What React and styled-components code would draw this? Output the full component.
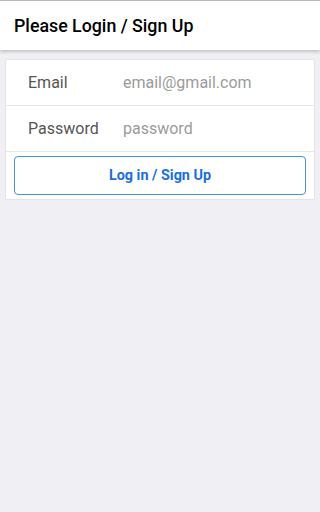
import styled, { createGlobalStyle } from 'styled-components';

const Global = createGlobalStyle`
    html, body {
        margin: 0;
        padding: 0;
        background: #efeff4;
        font-family: Roboto, "Liberation Sans", sans-serif;
    }
`;

function App(){
    return (
        <Page>
            <Global />
            <Header>
                <Title>Please Login / Sign Up</Title>
            </Header>
            <Card>
                <Row>
                    <Label>Email</Label>
                    <Input type="email" placeholder="email@gmail.com" />
                </Row>
                <Row>
                    <Label>Password</Label>
                    <Input type="password" placeholder="password" />
                </Row>
                <ButtonWrap>
                    <Button>Log in / Sign Up</Button>
                </ButtonWrap>
            </Card>
        </Page>
    )
}
    const Page = styled.div`
        min-height: 512px;
        background: #efeff4;
    `;
    const Header = styled.header`
        height: 49px;
        display: flex;
        align-items: center;
        padding: 0 14px;
        background: #fff;
        border-top: 1px solid #b8b8b8;
        box-shadow: 0 2px 3px rgba(0, 0, 0, .18);
    `;
    const Title = styled.h1`
        margin: 0;
        font-size: 17.8px;
        font-weight: 500;
        color: #000;
    `;
    const Card = styled.div`
        margin: 9px 5px 0;
        background: #fff;
        border: 1px solid #e4e4e8;
        border-radius: 2px;
    `;
    const Row = styled.label`
        height: 45px;
        display: flex;
        align-items: center;
        padding-left: 22px;
        border-bottom: 1px solid #e8e8ec;
    `;
    const Label = styled.span`
        flex: 0 0 95px;
        font-size: 16px;
        color: #555;
    `;
    const Input = styled.input`
        flex: 1;
        min-width: 0;
        border: none;
        outline: none;
        padding: 0;
        font-family: inherit;
        font-size: 16px;
        color: #333;
        background: transparent;
        &::placeholder { color: #9b9b9b; }
    `;
    const ButtonWrap = styled.div`
        padding: 4px 8px 4px;
    `;
    const Button = styled.button`
        width: 100%;
        height: 39px;
        border: 1px solid #4a90d9;
        border-radius: 4px;
        background: #fff;
        color: #1a6fe0;
        font-family: inherit;
        font-size: 14.4px;
        font-weight: 700;
    `;

export default App;
